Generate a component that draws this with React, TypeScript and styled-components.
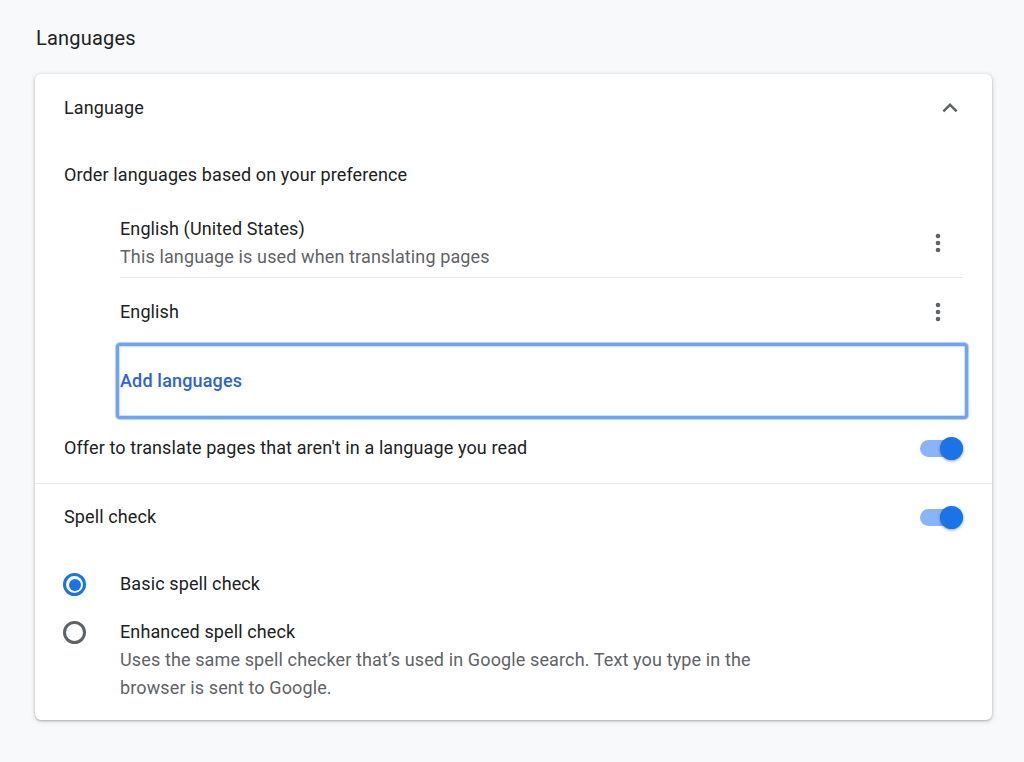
import React from 'react';
import styled, { createGlobalStyle } from 'styled-components';

const GlobalStyle = createGlobalStyle`
  html, body {
    margin: 0;
    padding: 0;
    background: #f8f9fa;
  }
  body {
    font-family: Roboto, "Liberation Sans", sans-serif;
    color: #202124;
  }
`;

const Page = styled.div`
  box-sizing: border-box;
  width: 1024px;
  height: 762px;
  overflow: hidden;
  padding: 24px 32px 0 35px;
  background: #f8f9fa;
`;

const PageTitle = styled.h2`
  margin: 0 0 22px 1px;
  height: 28px;
  font-size: 20px;
  font-weight: 400;
  line-height: 29px;
  letter-spacing: 0.2px;
  color: #202124;
`;

const Card = styled.section`
  height: 646px;
  border-radius: 6px;
  background: #fff;
  box-shadow: 0 1px 2px rgba(60, 64, 67, 0.3), 0 1px 4px 1px rgba(60, 64, 67, 0.15);
`;

const Row = styled.div<{ $height: number; $divider?: boolean }>`
  box-sizing: border-box;
  display: flex;
  align-items: center;
  justify-content: space-between;
  height: ${p => p.$height}px;
  padding: 0 29px;
  border-top: ${p => (p.$divider ? '1px solid #e8eaed' : 'none')};
`;

const Label = styled.span`
  font-size: 18px;
  line-height: 28px;
  letter-spacing: 0.115px;
`;

const Secondary = styled.div`
  font-size: 18px;
  line-height: 28px;
  letter-spacing: 0.125px;
  color: #5f6368;
`;

const LanguageList = styled.div`
  margin-left: 85px;
  margin-right: 29px;
`;

const LanguageItem = styled.div<{ $height: number; $divider?: boolean }>`
  box-sizing: border-box;
  display: flex;
  align-items: center;
  justify-content: space-between;
  height: ${p => p.$height}px;
  padding-top: ${p => (p.$divider ? 3 : 0)}px;
  border-top: ${p => (p.$divider ? '1px solid #e8eaed' : 'none')};
`;

const MoreButton = styled.span`
  display: flex;
  width: 48px;
  justify-content: center;
  margin-right: 1px;
`;

const ExpandButton = styled.span`
  display: flex;
  margin-right: -2px;
`;

const AddLanguages = styled.button`
  box-sizing: border-box;
  display: block;
  width: 852px;
  height: 76px;
  margin: 0 24px -6px 81px;
  padding: 0 0 2px 1px;
  border: 3px solid #6fa3f5;
  border-radius: 4px;
  background: #fff;
  box-shadow: 0 0 1px 1px rgba(111, 163, 245, 0.55), inset 0 0 1px 1px rgba(138, 180, 248, 0.45);
  color: #2b63d9;
  font-family: inherit;
  font-size: 18px;
  font-weight: 500;
  letter-spacing: 0.17px;
  text-align: left;
`;

const Toggle = styled.span`
  position: relative;
  display: block;
  width: 43px;
  height: 17px;
  border-radius: 9px;
  background: #8ab4f8;

  &::after {
    content: '';
    position: absolute;
    top: -3px;
    right: 0;
    width: 23px;
    height: 23px;
    border-radius: 50%;
    background: #1a73e8;
    box-shadow: 0 1px 3px rgba(0, 0, 0, 0.4);
  }
`;

const RadioRow = styled.div<{ $height: number }>`
  box-sizing: border-box;
  display: flex;
  align-items: flex-start;
  height: ${p => p.$height}px;
  padding: 20px 0 0 28px;
`;

const Radio = styled.span<{ $checked?: boolean }>`
  position: relative;
  box-sizing: border-box;
  flex: none;
  width: 23px;
  height: 23px;
  margin: 3px 34px 0 0;
  border: 3px solid ${p => (p.$checked ? '#1a73e8' : '#5f6368')};
  border-radius: 50%;

  &::after {
    content: '';
    display: ${p => (p.$checked ? 'block' : 'none')};
    position: absolute;
    inset: 2.5px;
    border-radius: 50%;
    background: #1a73e8;
  }
`;

const RadioText = styled.div`
  width: 650px;
`;

const Chevron = () => (
  <svg width="30" height="30" viewBox="0 0 24 24" fill="#5f6368">
    <path d="M12 8l-6 6 1.41 1.41L12 10.83l4.59 4.58L18 14z" />
  </svg>
);

const MoreDots = () => (
  <svg width="24" height="24" viewBox="0 0 24 24" fill="#5f6368">
    <circle cx="12" cy="5" r="2.3" />
    <circle cx="12" cy="12" r="2.3" />
    <circle cx="12" cy="19" r="2.3" />
  </svg>
);

export default function App() {
  return (
    <Page>
      <GlobalStyle />
      <PageTitle>Languages</PageTitle>
      <Card>
        <Row $height={67}>
          <Label>Language</Label>
          <ExpandButton>
            <Chevron />
          </ExpandButton>
        </Row>
        <Row $height={68}>
          <Label>Order languages based on your preference</Label>
        </Row>
        <LanguageList>
          <LanguageItem $height={68}>
            <div>
              <Label>English (United States)</Label>
              <Secondary>This language is used when translating pages</Secondary>
            </div>
            <MoreButton>
              <MoreDots />
            </MoreButton>
          </LanguageItem>
          <LanguageItem $height={66} $divider>
            <Label>English</Label>
            <MoreButton>
              <MoreDots />
            </MoreButton>
          </LanguageItem>
        </LanguageList>
        <AddLanguages>Add languages</AddLanguages>
        <Row $height={70}>
          <Label>Offer to translate pages that aren't in a language you read</Label>
          <Toggle />
        </Row>
        <Row $height={67} $divider>
          <Label>Spell check</Label>
          <Toggle />
        </Row>
        <RadioRow $height={48}>
          <Radio $checked />
          <RadioText>
            <Label>Basic spell check</Label>
          </RadioText>
        </RadioRow>
        <RadioRow $height={122}>
          <Radio />
          <RadioText>
            <Label>Enhanced spell check</Label>
            <Secondary>
              Uses the same spell checker that’s used in Google search. Text you type in the browser is sent to Google.
            </Secondary>
          </RadioText>
        </RadioRow>
      </Card>
    </Page>
  );
}
